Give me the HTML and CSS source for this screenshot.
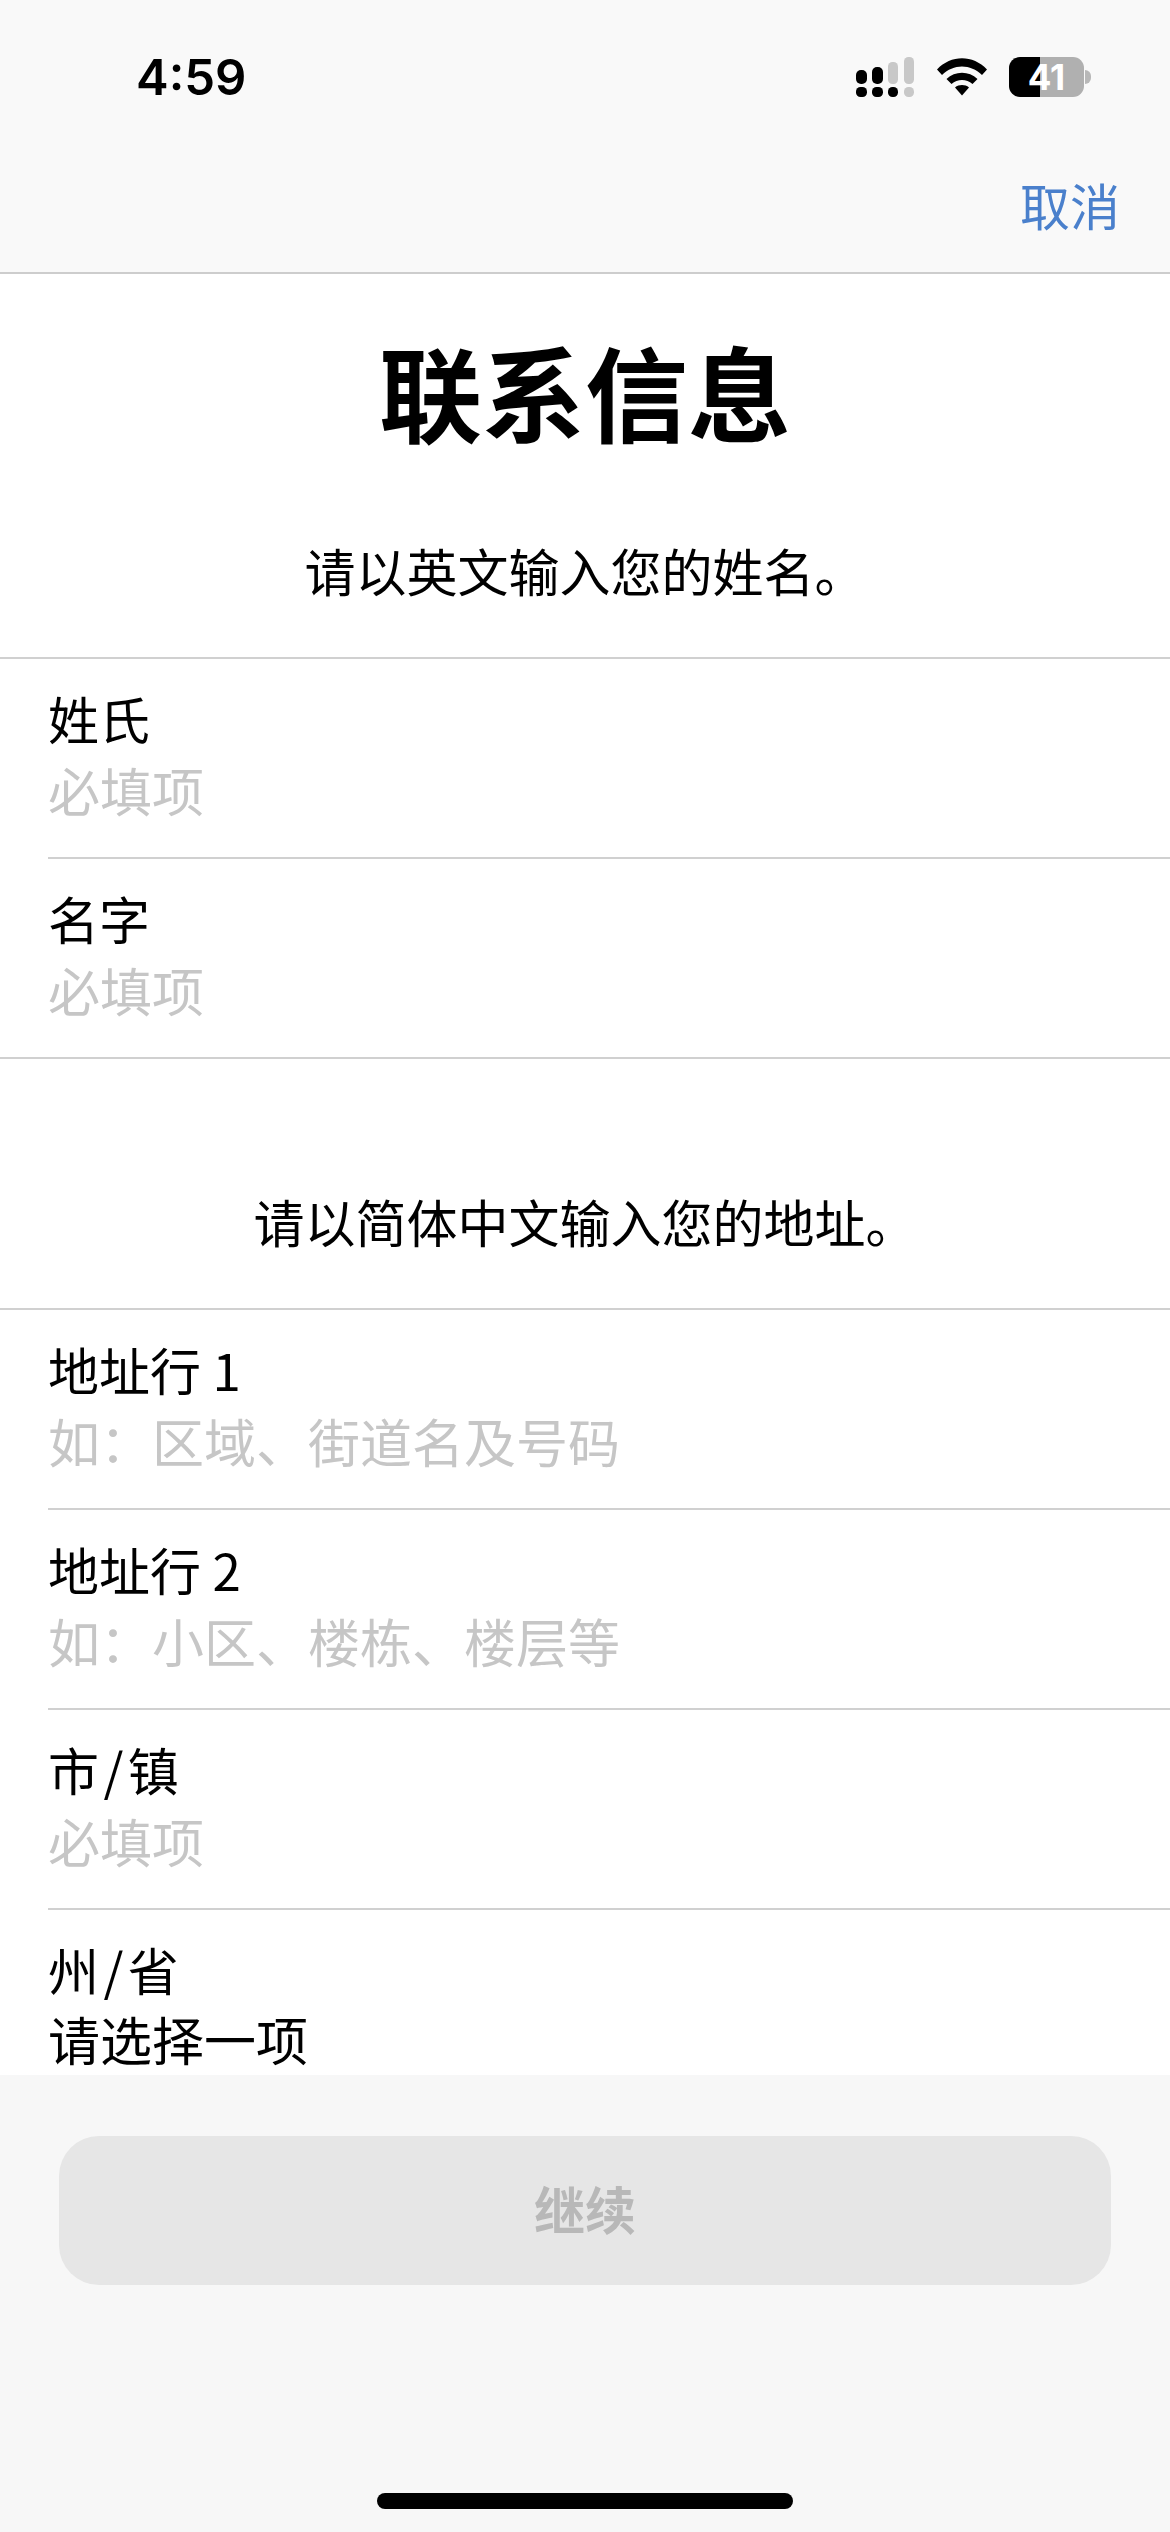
FILE: index.html
```html
<!DOCTYPE html>
<html lang="zh-CN">
<head>
    <meta charset="UTF-8">
    <meta name="viewport" content="width=device-width, initial-scale=1.0">
    <title>联系信息</title>
    <link rel="stylesheet" href="styles.css">
</head>
<body>
    <div class="screen">
        <header class="top">
            <div class="status">
                <span class="time">4:59</span>
                <div class="status-icons">
                    <svg class="signal" width="58" height="40" viewBox="0 0 58 40">
                        <rect x="0" y="13" width="11" height="14" rx="5" fill="#000"/>
                        <rect x="16" y="10" width="11" height="17" rx="5" fill="#000"/>
                        <rect x="32" y="5" width="10" height="22" rx="4.5" fill="#c8c8c8"/>
                        <rect x="48" y="0" width="10" height="27" rx="4.5" fill="#c8c8c8"/>
                        <rect x="0" y="30" width="11" height="10" rx="4.5" fill="#000"/>
                        <rect x="16" y="30" width="11" height="10" rx="4.5" fill="#000"/>
                        <rect x="32" y="30" width="10" height="10" rx="4.5" fill="#000"/>
                        <rect x="48" y="30" width="10" height="10" rx="4.5" fill="#c8c8c8"/>
                    </svg>
                    <svg class="wifi" width="50" height="38" viewBox="0 0 50 38">
                        <path d="M0 11.5 C14 -3.5 36 -3.5 50 11.5 L45 17 C33.5 5.5 16.5 5.5 5 17 Z" fill="#000"/>
                        <path d="M9.5 21 C18 12.5 32 12.5 40.5 21 L35.5 26 C29.5 20.5 20.5 20.5 14.5 26 Z" fill="#000"/>
                        <path d="M18 29.5 C22 26.3 28 26.3 32 29.5 L25 37.5 Z" fill="#000"/>
                    </svg>
                    <div class="battery"><span>41</span></div>
                    <div class="battery-nub"></div>
                </div>
            </div>
            <nav class="nav">
                <a href="#" class="cancel">取消</a>
            </nav>
        </header>

        <main class="content">
            <h1 class="title">联系信息</h1>
            <p class="section-note">请以英文输入您的姓名。</p>
            <div class="rows">
                <div class="row">
                    <div class="label">姓氏</div>
                    <div class="hint">必填项</div>
                </div>
                <div class="row">
                    <div class="label">名字</div>
                    <div class="hint">必填项</div>
                </div>
            </div>

            <p class="section-note address-note">请以简体中文输入您的地址。</p>
            <div class="rows">
                <div class="row">
                    <div class="label">地址行 1</div>
                    <div class="hint">如：区域、街道名及号码</div>
                </div>
                <div class="row">
                    <div class="label">地址行 2</div>
                    <div class="hint">如：小区、楼栋、楼层等</div>
                </div>
                <div class="row">
                    <div class="label tight">市 / 镇</div>
                    <div class="hint">必填项</div>
                </div>
                <div class="row row-cut">
                    <div class="label tight">州 / 省</div>
                    <div class="value">请选择一项</div>
                </div>
            </div>
        </main>

        <footer class="bottom">
            <button class="continue">继续</button>
            <div class="home-bar"></div>
        </footer>
    </div>
</body>
</html>
```

FILE: styles.css
```css
* {
    box-sizing: border-box;
}
body {
    margin: 0;
    background: #fff;
    color: #000;
    font-family: "Noto Sans CJK SC", "Liberation Sans", sans-serif;
}
.screen {
    display: flex;
    flex-direction: column;
    height: 2532px;
    overflow: hidden;
}
.top {
    height: 274px;
    flex-shrink: 0;
    background: #f9f9f9;
    border-bottom: 2px solid #cdcdcd;
}
.status {
    display: flex;
    justify-content: space-between;
    align-items: center;
    height: 154px;
    padding: 0 79px 0 136px;
}
.time {
    font-family: Inter, "Liberation Sans", sans-serif;
    font-size: 49px;
    font-weight: 600;
    line-height: 1;
}
.status-icons {
    display: flex;
    align-items: center;
}
.wifi {
    margin-left: 23px;
}
.battery {
    display: flex;
    justify-content: center;
    align-items: center;
    width: 75px;
    height: 40px;
    margin-left: 22px;
    border-radius: 11px;
    background: linear-gradient(90deg, #000 41%, #b0b0b0 41%);
    color: #fff;
    font-family: Inter, "Liberation Sans", sans-serif;
    font-size: 35px;
    font-weight: 700;
    line-height: 1;
}
.battery-nub {
    width: 6px;
    height: 14px;
    margin-left: 1px;
    border-radius: 0 7px 7px 0;
    background: #b8b8b8;
}
.nav {
    display: flex;
    justify-content: flex-end;
    padding: 24px 50px 0 0;
}
.cancel {
    color: #4a80cc;
    font-size: 50px;
    line-height: 52px;
    text-decoration: none;
}
.content {
    flex: 1;
    overflow: hidden;
}
.title {
    margin: 0;
    padding-top: 52px;
    font-size: 103px;
    font-weight: 700;
    line-height: 130px;
    text-align: center;
}
.section-note {
    margin: 0;
    padding: 78px 0 51px;
    font-size: 51px;
    line-height: 72px;
    text-align: center;
}
.address-note {
    padding-top: 126px;
}
.rows {
    border-top: 2px solid #d0d0d0;
}
.row {
    height: 200px;
    margin-left: 48px;
    padding-top: 24px;
    border-bottom: 2px solid #d0d0d0;
    font-size: 51px;
    line-height: 71px;
}
.row:last-child {
    border-bottom: 0;
}
.rows:first-of-type .row:last-child {
    margin-left: 0;
    padding-left: 48px;
    border-bottom: 2px solid #d0d0d0;
}
.row-cut {
    height: 164px;
}
.tight {
    word-spacing: -7px;
}
.hint, .value {
    font-size: 52px;
}
.hint {
    color: #c6c6c6;
}
.value {
    line-height: 67px;
}
.bottom {
    display: flex;
    flex-direction: column;
    align-items: center;
    height: 457px;
    flex-shrink: 0;
    padding-top: 61px;
    background: #f7f7f7;
}
.continue {
    width: 1052px;
    height: 149px;
    padding: 0 0 6px;
    border: 0;
    border-radius: 40px;
    background: #e6e6e6;
    color: #b8b8b8;
    font-family: inherit;
    font-size: 51px;
    font-weight: 700;
}
.home-bar {
    width: 416px;
    height: 16px;
    margin-top: 208px;
    border-radius: 8px;
    background: #000;
}
```
